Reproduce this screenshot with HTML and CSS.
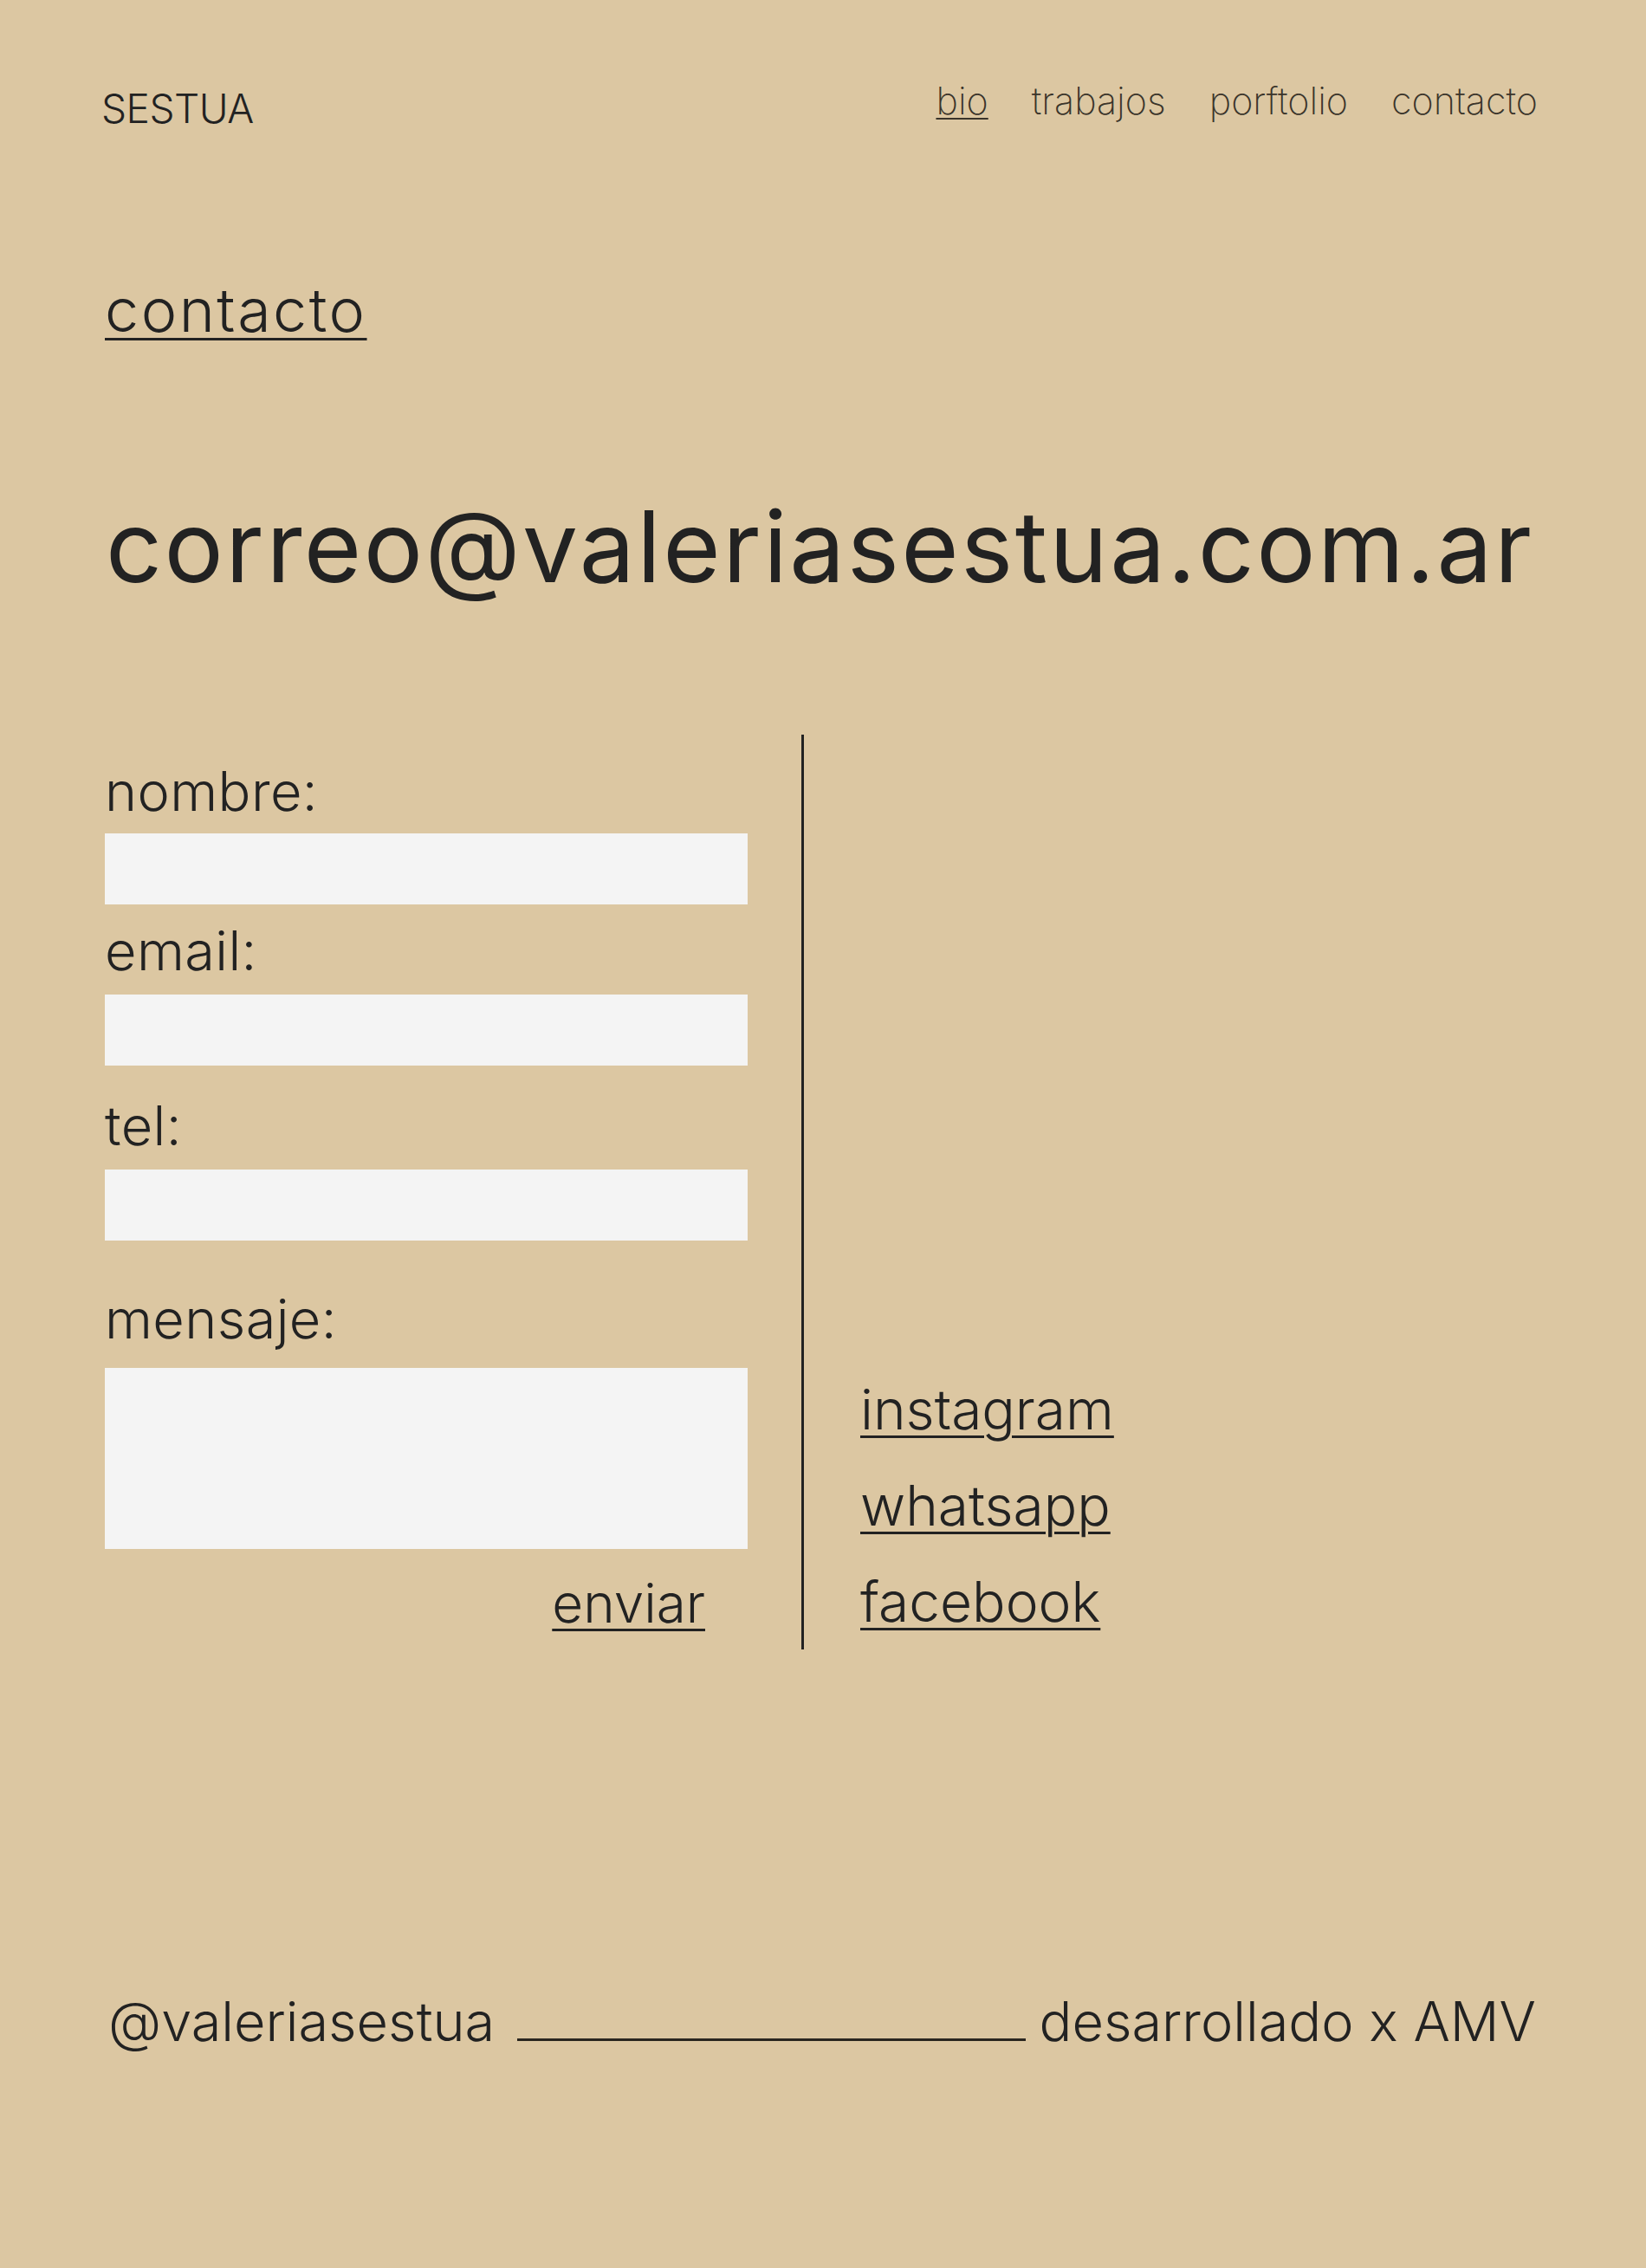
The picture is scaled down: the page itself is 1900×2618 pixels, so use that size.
FILE: index.html
```html
<!DOCTYPE html>
<html lang="es">
<head>
<meta charset="utf-8">
<title>SESTUA — contacto</title>
<link rel="stylesheet" href="styles.css">
</head>
<body>
<header class="top">
  <div class="brand">SESTUA</div>
  <nav class="nav">
    <a class="nav-link is-active" href="#">bio</a>
    <a class="nav-link" href="#">trabajos</a>
    <a class="nav-link" href="#">porftolio</a>
    <a class="nav-link" href="#">contacto</a>
  </nav>
</header>
<main class="content">
  <h1 class="page-title">contacto</h1>
  <p class="email">correo@valeriasestua.com.ar</p>
  <section class="contact">
    <form class="form">
      <label class="label label-name">nombre:</label>
      <input class="field" type="text">
      <label class="label label-email">email:</label>
      <input class="field" type="email">
      <label class="label label-tel">tel:</label>
      <input class="field" type="tel">
      <label class="label label-msg">mensaje:</label>
      <textarea class="field field-msg"></textarea>
      <div class="send-row"><a class="send" href="#">enviar</a></div>
    </form>
    <div class="divider"></div>
    <ul class="social">
      <li><a href="#">instagram</a></li>
      <li><a href="#">whatsapp</a></li>
      <li><a href="#">facebook</a></li>
    </ul>
  </section>
</main>
<footer class="footer">
  <span>@valeriasestua</span>
  <span class="rule"></span>
  <span>desarrollado x AMV</span>
</footer>
</body>
</html>
```
FILE: styles.css
```css
html { background: #dcc7a2; }
body {
  margin: 0;
  font-family: Inter, "Liberation Sans", sans-serif;
  color: #222;
  background: #dcc7a2;
}
a { color: inherit; }

.top {
  display: flex;
  justify-content: space-between;
  align-items: flex-start;
  padding: 95px 125px 0 117px;
}
.brand {
  margin-top: 7px;
  font-size: 46px;
  line-height: 1;
  font-weight: 300;
  letter-spacing: -0.5px;
}
.nav { display: flex; gap: 50px; }
.nav-link {
  font-size: 43px;
  line-height: 1;
  font-weight: 200;
  color: #3a342a;
  text-decoration: none;
}
.nav-link.is-active {
  text-decoration: underline;
  text-decoration-thickness: 2px;
  text-underline-offset: 4px;
}

.content { padding: 0 125px 0 121px; }
.page-title {
  margin: 175px 0 0;
  font-size: 70px;
  line-height: 1;
  font-weight: 300;
  letter-spacing: 2.5px;
  text-decoration: underline;
  text-decoration-thickness: 3px;
  text-underline-offset: 7px;
}
.email {
  margin: 181px 0 0;
  padding-left: 1px;
  font-size: 114px;
  line-height: 1;
  font-weight: 400;
  letter-spacing: 2.4px;
}

.contact {
  display: flex;
  margin-top: 160px;
}
.form {
  width: 742px;
  display: flex;
  flex-direction: column;
  padding: 34px 0 22px;
}
.label {
  font-size: 63px;
  line-height: 1;
  font-weight: 300;
  letter-spacing: 0.4px;
  margin-bottom: 17px;
}
.label-email { margin-top: 22px; margin-bottom: 19px; }
.label-tel { margin-top: 38px; margin-bottom: 19px; }
.label-msg { margin-top: 59px; margin-bottom: 25px; }
.field {
  display: block;
  height: 82px;
  border: 0;
  padding: 0;
  margin: 0;
  background: #f4f4f4;
  font: inherit;
}
.field-msg { height: 209px; resize: none; }
.send-row {
  display: flex;
  justify-content: flex-end;
  margin-top: 32px;
  padding-right: 49px;
}
.send {
  font-size: 62px;
  line-height: 1;
  font-weight: 300;
  text-decoration-thickness: 3px;
  text-underline-offset: 7px;
}
.divider {
  width: 3px;
  background: #222;
  margin: 0 65px 0 62px;
}
.social {
  list-style: none;
  margin: 0;
  padding: 0;
  display: flex;
  flex-direction: column;
  justify-content: flex-end;
}
.social a {
  font-size: 64px;
  line-height: 111px;
  font-weight: 300;
  text-decoration-thickness: 3px;
  text-underline-offset: 7px;
}

.footer {
  display: flex;
  align-items: baseline;
  padding: 0 127px 253px 125px;
  margin-top: 398px;
  font-size: 63px;
  line-height: 1;
  font-weight: 300;
}
.rule {
  flex: 1;
  border-bottom: 3px solid #2a2620;
  margin: 0 15px 0 26px;
}
```
